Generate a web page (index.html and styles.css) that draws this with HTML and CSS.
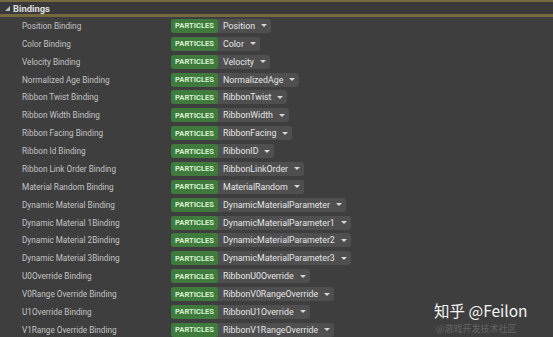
FILE: index.html
```html
<html>

<head>
    <title>Bindings</title>
    <link rel="stylesheet" href="styles.css">
</head>

<body>
    <div class="panel">
        <div class="header">
            <span class="caret"></span>
            <span class="title">Bindings</span>
        </div>
        <div class="rows">
            <div class="row"><span class="label">Position Binding</span><span class="pill"><span class="badge">PARTICLES</span><span class="value">Position</span><span class="arrow"></span></span></div>
            <div class="row"><span class="label">Color Binding</span><span class="pill"><span class="badge">PARTICLES</span><span class="value">Color</span><span class="arrow"></span></span></div>
            <div class="row"><span class="label">Velocity Binding</span><span class="pill"><span class="badge">PARTICLES</span><span class="value">Velocity</span><span class="arrow"></span></span></div>
            <div class="row"><span class="label">Normalized Age Binding</span><span class="pill"><span class="badge">PARTICLES</span><span class="value">NormalizedAge</span><span class="arrow"></span></span></div>
            <div class="row"><span class="label">Ribbon Twist Binding</span><span class="pill"><span class="badge">PARTICLES</span><span class="value">RibbonTwist</span><span class="arrow"></span></span></div>
            <div class="row"><span class="label">Ribbon Width Binding</span><span class="pill"><span class="badge">PARTICLES</span><span class="value">RibbonWidth</span><span class="arrow"></span></span></div>
            <div class="row"><span class="label">Ribbon Facing Binding</span><span class="pill"><span class="badge">PARTICLES</span><span class="value">RibbonFacing</span><span class="arrow"></span></span></div>
            <div class="row"><span class="label">Ribbon Id Binding</span><span class="pill"><span class="badge">PARTICLES</span><span class="value">RibbonID</span><span class="arrow"></span></span></div>
            <div class="row"><span class="label">Ribbon Link Order Binding</span><span class="pill"><span class="badge">PARTICLES</span><span class="value">RibbonLinkOrder</span><span class="arrow"></span></span></div>
            <div class="row"><span class="label">Material Random Binding</span><span class="pill"><span class="badge">PARTICLES</span><span class="value">MaterialRandom</span><span class="arrow"></span></span></div>
            <div class="row"><span class="label">Dynamic Material Binding</span><span class="pill"><span class="badge">PARTICLES</span><span class="value">DynamicMaterialParameter</span><span class="arrow"></span></span></div>
            <div class="row"><span class="label">Dynamic Material 1Binding</span><span class="pill"><span class="badge">PARTICLES</span><span class="value">DynamicMaterialParameter1</span><span class="arrow"></span></span></div>
            <div class="row"><span class="label">Dynamic Material 2Binding</span><span class="pill"><span class="badge">PARTICLES</span><span class="value">DynamicMaterialParameter2</span><span class="arrow"></span></span></div>
            <div class="row"><span class="label">Dynamic Material 3Binding</span><span class="pill"><span class="badge">PARTICLES</span><span class="value">DynamicMaterialParameter3</span><span class="arrow"></span></span></div>
            <div class="row"><span class="label">U0Override Binding</span><span class="pill"><span class="badge">PARTICLES</span><span class="value">RibbonU0Override</span><span class="arrow"></span></span></div>
            <div class="row"><span class="label">V0Range Override Binding</span><span class="pill"><span class="badge">PARTICLES</span><span class="value">RibbonV0RangeOverride</span><span class="arrow"></span></span></div>
            <div class="row"><span class="label">U1Override Binding</span><span class="pill"><span class="badge">PARTICLES</span><span class="value">RibbonU1Override</span><span class="arrow"></span></span></div>
            <div class="row"><span class="label">V1Range Override Binding</span><span class="pill"><span class="badge">PARTICLES</span><span class="value">RibbonV1RangeOverride</span><span class="arrow"></span></span></div>
        </div>
    </div>

    <!-- watermark -->
    <div class="mark">
        <span class="mark-main">知乎 @Feilon</span>
        <span class="mark-ghost">@游戏开发技术社区</span>
    </div>
</body>

</html>
```

FILE: styles.css
```css
* {
    margin: 0;
    padding: 0;
    box-sizing: border-box;
}

body {
    width: 553px;
    height: 337px;
    overflow: hidden;
    position: relative;
    background-color: #3e3e3e;
    font-family: Roboto, "Liberation Sans", sans-serif;
}

.header {
    height: 17px;
    display: flex;
    align-items: center;
    gap: 3px;
    padding-left: 5px;
    background-color: #393939;
    border-top: 2px solid #76683f;
    border-bottom: 3px solid #76683f;
}

.caret {
    width: 0;
    height: 0;
    border-left: 5px solid transparent;
    border-bottom: 5px solid #bdbdbd;
}

.title {
    color: #e0e0e0;
    font-size: 9.4px;
    font-weight: 700;
}

.rows {
    display: flex;
    flex-direction: column;
}

.row {
    height: 17.88px;
    display: flex;
    align-items: center;
}

.label {
    width: 171px;
    padding-left: 22px;
    color: #c4c4c4;
    font-size: 8.2px;
}

.pill {
    height: 14px;
    display: inline-flex;
    align-items: center;
    background-color: #4f4f4f;
    border-radius: 3px;
    padding-right: 4px;
}

.badge {
    height: 14px;
    display: flex;
    align-items: center;
    padding: 0 4px;
    background-color: #3f7b3c;
    border-radius: 3px;
    color: #d9f2d2;
    font-size: 7.6px;
    font-weight: 700;
}

.value {
    margin-left: 5px;
    color: #e6e6e6;
    font-size: 8.8px;
}

.arrow {
    margin-left: 6px;
    width: 0;
    height: 0;
    border-left: 3.5px solid transparent;
    border-right: 3.5px solid transparent;
    border-top: 3.5px solid #d8d8d8;
}

/* watermark */
.mark {
    position: absolute;
    left: 434px;
    top: 301px;
    width: 120px;
}

.mark-main {
    display: block;
    color: #f4f4f4;
    font-size: 15.5px;
    font-family: "Noto Sans CJK SC", sans-serif;
    line-height: 18px;
}

.mark-ghost {
    position: absolute;
    left: 2px;
    top: 22px;
    color: rgba(200, 200, 200, 0.3);
    font-size: 9px;
    line-height: 11px;
    font-family: "Noto Sans CJK SC", sans-serif;
}
```
